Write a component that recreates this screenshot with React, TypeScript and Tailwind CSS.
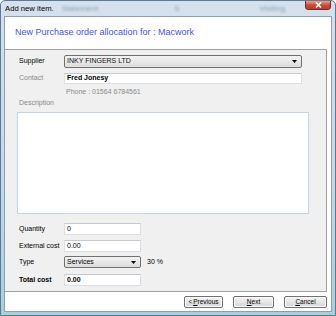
import React from "react";

const font = { fontFamily: '"Liberation Sans", Arial, sans-serif' };

function Arrow() {
  return (
    <svg width="5" height="3" viewBox="0 0 5 3" className="shrink-0">
      <path d="M0 0 H5 L2.5 3 Z" fill="#000" />
    </svg>
  );
}

function Btn({ children }: { children: React.ReactNode }) {
  return (
    <div className="h-[12px] flex items-center justify-center rounded-[2px] border border-[#707070] bg-gradient-to-b from-[#f4f4f4] via-[#e6e6e6] to-[#d4d4d4] text-[6.5px] text-black shadow-[inset_0_0_0_1px_#fcfcfc]">
      {children}
    </div>
  );
}

export default function App() {
  return (
    <div
      className="w-[336px] h-[316px] flex flex-col bg-gradient-to-b from-[#d5e1ec] via-[#c9d8e8] to-[#a9cfdc] border border-[#5a7a98] rounded-t-[5px] overflow-hidden"
      style={font}
    >
      {/* title bar */}
      <div className="h-[15px] shrink-0 flex items-center pl-[4px] relative">
        <span className="text-[7.7px] text-black">Add new item.</span>
        <span className="ml-[8px] text-[8px] text-[#8ea2b6] blur-[1.2px]">Statement</span>
        <span className="ml-[76px] text-[8px] text-[#8ea2b6] blur-[1.2px]">S</span>
        <span className="ml-[80px] text-[8px] text-[#8ea2b6] blur-[1.2px]">Visiting</span>
        <div className="absolute top-[-1px] right-[4px] w-[26px] h-[10px] rounded-b-[3px] border border-[#7a2a1e] bg-gradient-to-b from-[#e8a293] via-[#cf4a33] to-[#c0382a] flex items-center justify-center">
          <svg width="7" height="6" viewBox="0 0 7 6">
            <path d="M1 0.5 L6 5.5 M6 0.5 L1 5.5" stroke="#fff" strokeWidth="1.6" />
          </svg>
        </div>
      </div>

      {/* client area */}
      <div className="mx-[3px] h-[296px] shrink-0 flex flex-col bg-white border border-[#8c9fb3]">
        {/* header */}
        <div className="h-[32px] shrink-0 flex items-center pl-[10px]">
          <span className="text-[9px] text-[#3a56f0]">New Purchase order allocation for : Macwork</span>
        </div>

        {/* main gray panel */}
        <div className="mr-[4px] h-[243px] shrink-0 bg-[#f0f0f0] border-t border-r border-b border-[#a0a0a0] flex flex-col pl-[12px]">
          {/* Supplier */}
          <div className="mt-[5px] flex items-center h-[13px]">
            <span className="w-[47px] pl-[2px] text-[7px] text-black">Supplier</span>
            <div className="w-[238px] h-[13px] rounded-[2px] border border-[#707070] bg-gradient-to-b from-[#f3f3f3] to-[#dddddd] flex items-center pl-[2px] pr-[4px]">
              <span className="flex-1 text-[7px] text-[#111]">INKY FINGERS LTD</span>
              <Arrow />
            </div>
          </div>
          {/* Contact */}
          <div className="mt-[5px] flex items-center h-[11px]">
            <span className="w-[47px] pl-[2px] text-[7px] text-[#8a8a8a]">Contact</span>
            <div className="w-[238px] h-[11px] border border-[#dcdfe5] border-t-[#c5c9d2] bg-white flex items-center pl-[2px]">
              <span className="text-[7px] font-bold text-black">Fred Jonesy</span>
            </div>
          </div>
          {/* Phone */}
          <div className="mt-[3px] h-[10px] flex items-center pl-[49px]">
            <span className="text-[7px] text-[#8a8a8a]">Phone : 01564 6784561</span>
          </div>
          {/* Description */}
          <div className="mt-[1px] h-[10px] flex items-center pl-[2px]">
            <span className="text-[7px] text-[#8a8a8a]">Description</span>
          </div>
          <div className="mt-[4px] w-[292px] h-[102px] bg-white border border-[#c2d5e6]" />

          {/* Quantity */}
          <div className="mt-[9px] flex items-center h-[12px]">
            <span className="w-[47px] pl-[2px] text-[7px] text-black">Quantity</span>
            <div className="w-[77px] h-[12px] border border-[#dcdfe5] border-t-[#c5c9d2] bg-white flex items-center pl-[2px]">
              <span className="text-[7px] text-black">0</span>
            </div>
          </div>
          {/* External cost */}
          <div className="mt-[5px] flex items-center h-[12px]">
            <span className="w-[47px] pl-[2px] text-[7px] text-black whitespace-nowrap">External cost</span>
            <div className="w-[77px] h-[12px] border border-[#dcdfe5] border-t-[#c5c9d2] bg-white flex items-center pl-[2px]">
              <span className="text-[7px] text-black">0.00</span>
            </div>
          </div>
          {/* Type */}
          <div className="mt-[4px] flex items-center h-[12px]">
            <span className="w-[47px] pl-[2px] text-[7px] text-black">Type</span>
            <div className="w-[77px] h-[12px] rounded-[2px] border border-[#707070] bg-gradient-to-b from-[#f3f3f3] to-[#dddddd] flex items-center pl-[2px] pr-[4px]">
              <span className="flex-1 text-[7px] text-black">Services</span>
              <Arrow />
            </div>
            <span className="ml-[6px] text-[7px] text-black">30 %</span>
          </div>
          {/* Total cost */}
          <div className="mt-[6px] flex items-center h-[12px]">
            <span className="w-[47px] pl-[2px] text-[7px] font-bold text-black">Total cost</span>
            <div className="w-[77px] h-[12px] border border-[#dcdfe5] border-t-[#c5c9d2] bg-white flex items-center pl-[2px]">
              <span className="text-[7px] font-bold text-black">0.00</span>
            </div>
          </div>
        </div>

        {/* buttons */}
        <div className="flex-1 flex items-center justify-end gap-[10px] pr-[4px]">
          <div className="w-[39px]">
            <Btn>
              &lt; <span className="underline ml-[1px]">P</span>revious
            </Btn>
          </div>
          <div className="w-[41px]">
            <Btn>
              <span className="underline">N</span>ext
            </Btn>
          </div>
          <div className="w-[43px]">
            <Btn>
              <span className="underline">C</span>ancel
            </Btn>
          </div>
        </div>
      </div>
    </div>
  );
}
